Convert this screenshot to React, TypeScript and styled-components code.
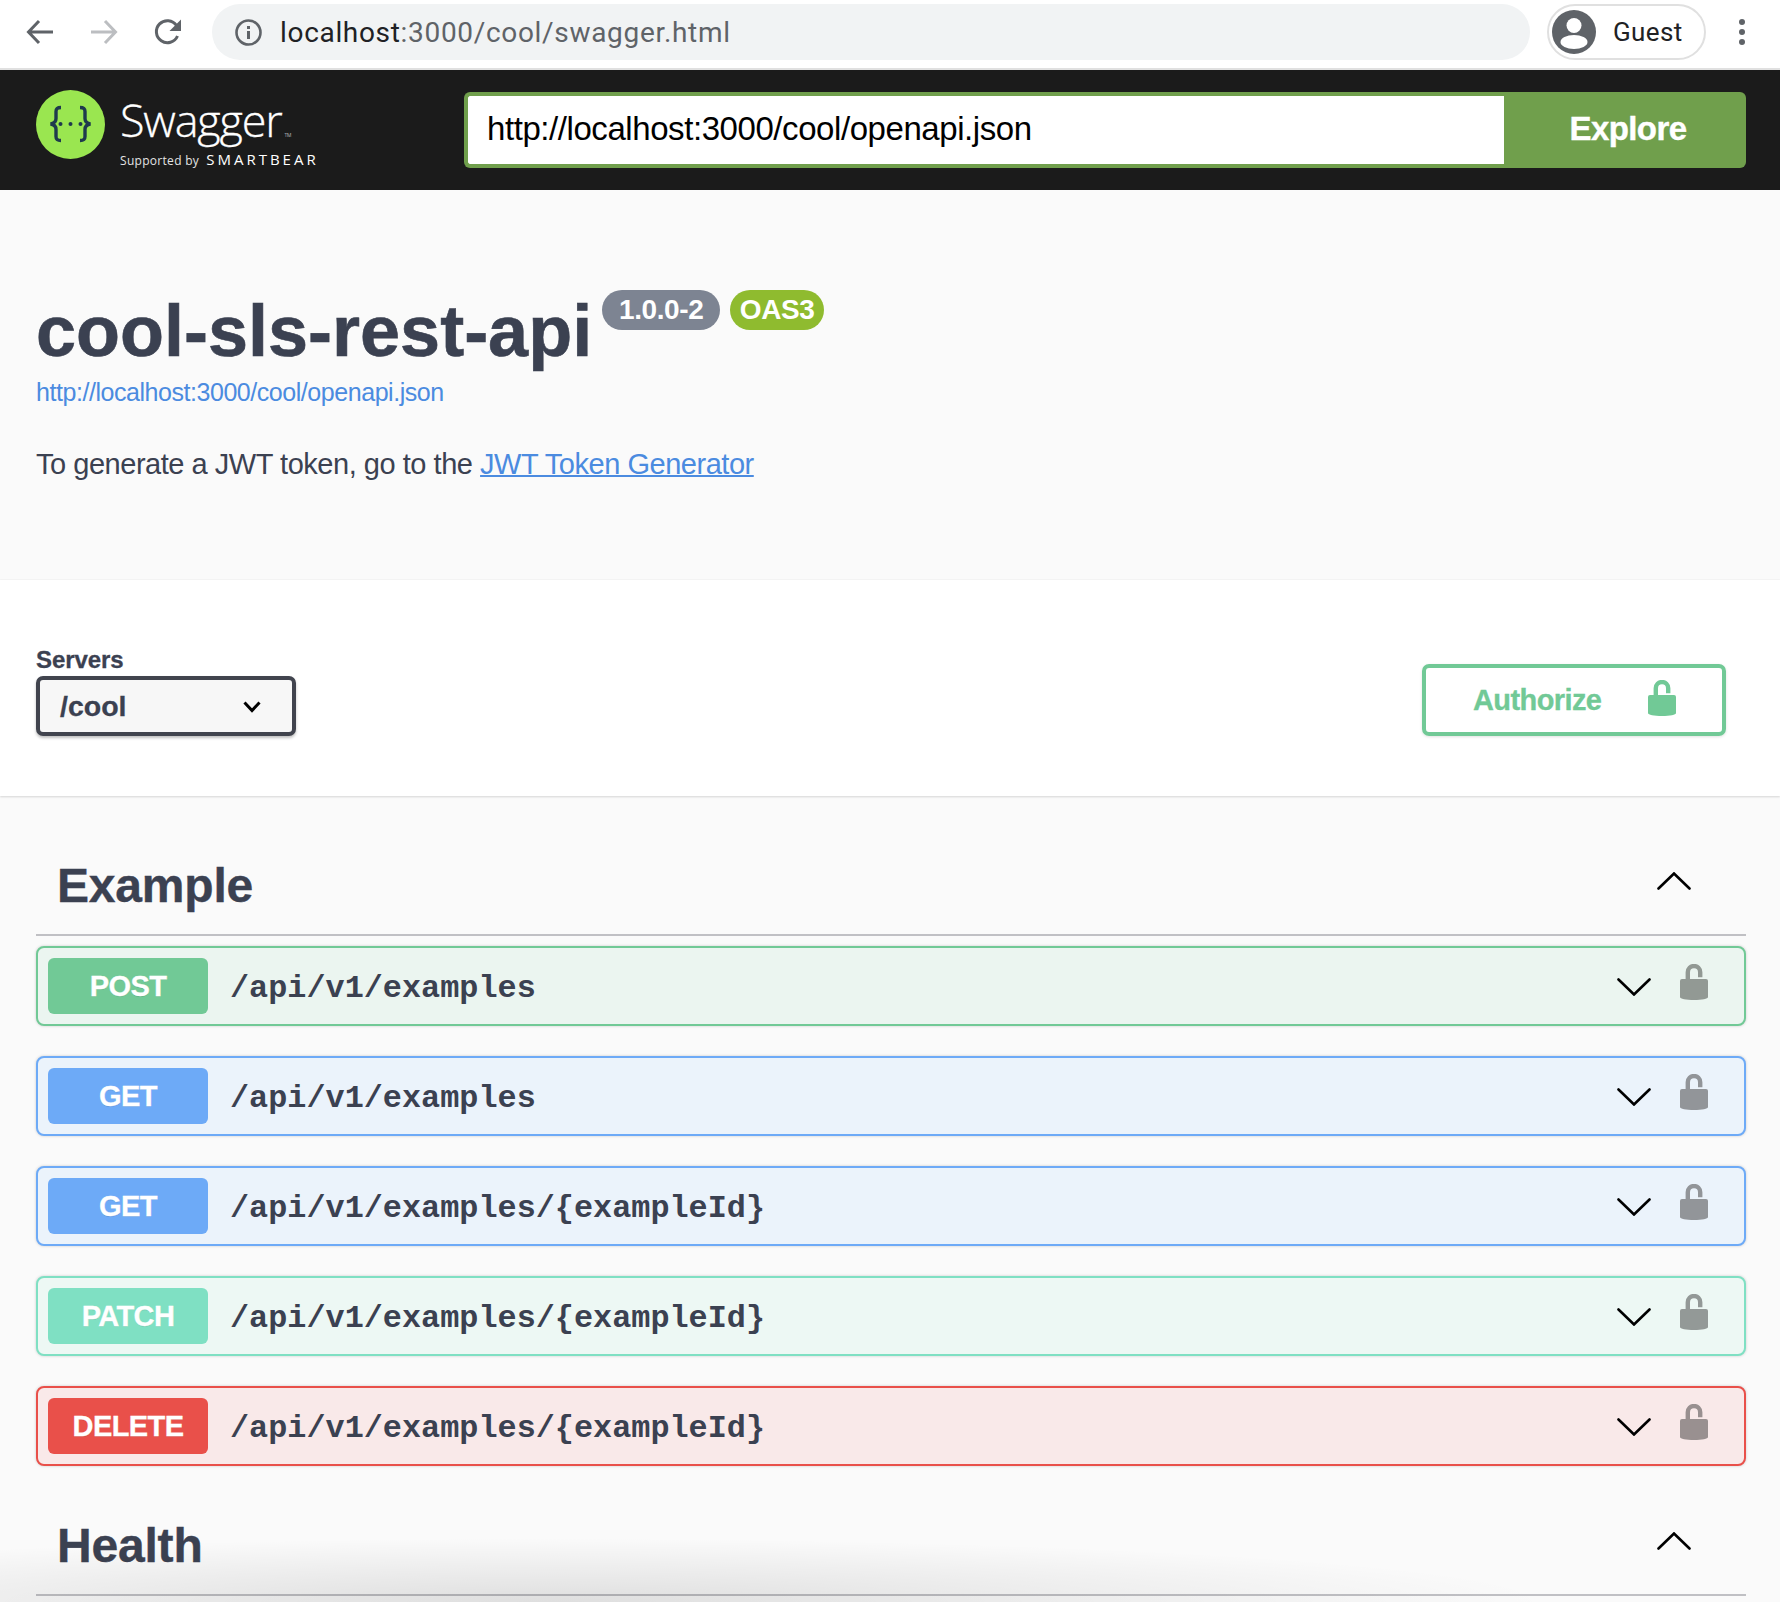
import React from "react";
import styled, { createGlobalStyle } from "styled-components";

const Global = createGlobalStyle`
  html, body { margin: 0; padding: 0; background: #fafafa; overflow: hidden; }
  * { box-sizing: border-box; }
`;

const Page = styled.div`
  position: relative;
  width: 1780px;
  height: 1602px;
  overflow: hidden;
  background: #fafafa;
  font-family: "Liberation Sans", Arial, sans-serif;
  color: #3b4151;
`;

const BrowserBar = styled.div`
  display: flex;
  align-items: center;
  height: 70px;
  padding: 0 35px 4px 8px;
  background: #fff;
  border-bottom: 2px solid #e0e0e0;
`;
const NavButton = styled.div`
  display: flex;
  width: 64px;
  justify-content: center;
  align-items: center;
`;
const AddressBar = styled.div`
  flex: 1;
  display: flex;
  align-items: center;
  height: 56px;
  margin-left: 12px;
  padding-left: 23px;
  gap: 18px;
  border-radius: 28px;
  background: #f1f3f4;
  font-family: Roboto, sans-serif;
  font-size: 28px;
  letter-spacing: 0.68px;
  color: #5f6368;
`;
const Host = styled.span`
  color: #202124;
`;
const GuestPill = styled.div`
  display: flex;
  align-items: center;
  flex: none;
  width: 159px;
  height: 56px;
  margin-left: 17px;
  padding-left: 3px;
  gap: 17px;
  border: 2px solid #e0e0e0;
  border-radius: 28px;
  font-family: Roboto, sans-serif;
  font-size: 26px;
  letter-spacing: 0.4px;
  color: #202124;
`;
const MenuDots = styled.div`
  display: flex;
  flex: none;
  flex-direction: column;
  gap: 4px;
  margin-left: 33px;
`;
const Dot = styled.span`
  width: 6px;
  height: 6px;
  border-radius: 50%;
  background: #5f6368;
`;

const Topbar = styled.div`
  display: flex;
  align-items: center;
  height: 120px;
  padding: 0 34px 0 36px;
  background: #1b1b1b;
`;
const Brand = styled.div`
  display: flex;
  align-items: flex-start;
  align-self: flex-start;
  width: 428px;
  margin-top: 20px;
  gap: 15px;
  color: #fff;
`;
const BrandText = styled.div`
  display: flex;
  flex-direction: column;
  margin-top: 8px;
`;
const Wordmark = styled.span`
  font-family: "Open Sans", sans-serif;
  font-weight: 300;
  font-size: 45px;
  line-height: 44px;
  letter-spacing: -1.2px;
  -webkit-text-stroke: 0.3px #fff;
`;
const Tm = styled.sup`
  font-size: 5px;
  line-height: 0;
  letter-spacing: 0;
  vertical-align: baseline;
  margin-left: 3px;
  -webkit-text-stroke: 0;
`;
const Support = styled.div`
  display: flex;
  align-items: baseline;
  gap: 7px;
  margin-top: 9px;
  font-family: "Open Sans", sans-serif;
  font-size: 12px;
  line-height: 16px;
  letter-spacing: 0.3px;
  color: #e4e4e4;
`;
const SmartBear = styled.span`
  font-size: 15px;
  font-weight: 500;
  letter-spacing: 3px;
  color: #fff;
`;
const SpecForm = styled.div`
  flex: 1;
  display: flex;
  height: 76px;
`;
const SpecInput = styled.div`
  flex: 1;
  display: flex;
  align-items: center;
  padding: 0 0 2px 19px;
  background: #fff;
  border: 4px solid #709f4c;
  border-right: 0;
  border-radius: 6px 0 0 6px;
  font-size: 33px;
  letter-spacing: -0.43px;
  color: #000;
`;
const ExploreButton = styled.div`
  display: flex;
  align-items: center;
  justify-content: center;
  width: 242px;
  padding: 0 0 2px 6px;
  background: #709f4c;
  border-radius: 0 6px 6px 0;
  font-size: 33px;
  font-weight: 700;
  letter-spacing: -0.6px;
  -webkit-text-stroke: 0.4px #fff;
  color: #fff;
`;

const Info = styled.div`
  height: 390px;
  padding: 99px 36px 0;
  border-bottom: 1px solid #f5f5f5;
`;
const TitleRow = styled.div`
  display: flex;
  align-items: flex-start;
`;
const Title = styled.h1`
  margin: 0;
  font-size: 72px;
  line-height: 84px;
  font-weight: 700;
  letter-spacing: 0;
  -webkit-text-stroke: 0.6px #3b4151;
`;
const Pill = styled.span<{ $bg: string; $ml: number; $w: number }>`
  display: flex;
  align-items: center;
  justify-content: center;
  width: ${(p) => p.$w}px;
  height: 40px;
  margin-top: 1px;
  margin-left: ${(p) => p.$ml}px;
  border-radius: 20px;
  background: ${(p) => p.$bg};
  font-size: 28px;
  font-weight: 700;
  letter-spacing: -0.4px;
  color: #fff;
`;
const SpecLink = styled.div`
  margin-top: 4px;
  font-size: 25px;
  line-height: 30px;
  letter-spacing: -0.45px;
  color: #4b8be0;
`;
const Description = styled.p`
  margin: 40px 0 0;
  font-size: 29px;
  line-height: 34px;
  letter-spacing: -0.47px;
`;
const Anchor = styled.span`
  color: #4b8be0;
  text-decoration: underline;
  text-decoration-thickness: 2px;
`;

const SchemeBar = styled.div`
  display: flex;
  align-items: flex-end;
  justify-content: space-between;
  height: 216px;
  padding: 0 54px 60px 36px;
  background: #fff;
  box-shadow: 0 1px 2px rgba(0, 0, 0, 0.15);
`;
const Servers = styled.div`
  display: flex;
  flex-direction: column;
`;
const ServersLabel = styled.span`
  font-size: 24px;
  line-height: 28px;
  font-weight: 700;
  letter-spacing: -0.1px;
  -webkit-text-stroke: 0.3px #3b4151;
`;
const Select = styled.div`
  display: flex;
  align-items: center;
  justify-content: space-between;
  width: 260px;
  height: 60px;
  margin-top: 2px;
  padding: 1px 31px 0 20px;
  background: #f7f7f7;
  border: 4px solid #41444e;
  border-radius: 7px;
  box-shadow: 0 2px 3px rgba(0, 0, 0, 0.25);
  font-size: 28.500px;
  font-weight: 700;
  -webkit-text-stroke: 0.3px #3b4151;
`;
const Authorize = styled.div`
  display: flex;
  align-items: center;
  width: 304px;
  height: 72px;
  padding-left: 47px;
  gap: 47px;
  border: 4px solid #71c996;
  border-radius: 7px;
  box-shadow: 0 1px 3px rgba(0, 0, 0, 0.12);
  font-size: 29px;
  font-weight: 700;
  letter-spacing: -0.6px;
  -webkit-text-stroke: 0.3px #71c996;
  color: #71c996;
`;
const AuthLock = styled.span`
  display: flex;
  margin-top: -5px;
`;

const Operations = styled.div`
  display: flex;
  flex-direction: column;
  padding: 0 34px 0 36px;
`;
const TagHeader = styled.div<{ $h: number }>`
  display: flex;
  align-items: flex-end;
  justify-content: space-between;
  height: ${(p) => p.$h}px;
  padding: 0 55px 20px 21px;
  border-bottom: 2px solid #c0c0c4;
`;
const TagName = styled.h3`
  margin: 0;
  font-size: 48px;
  line-height: 56px;
  font-weight: 700;
  letter-spacing: -0.2px;
  -webkit-text-stroke: 0.4px #3b4151;
`;
const TagToggle = styled.span`
  display: flex;
  margin-bottom: 24px;
`;
const Rows = styled.div`
  display: flex;
  flex-direction: column;
  gap: 30px;
  margin-top: 10px;
`;
const Row = styled.div<{ $border: string; $bg: string }>`
  display: flex;
  align-items: center;
  height: 80px;
  padding: 0 36px 0 10px;
  border: 2px solid ${(p) => p.$border};
  border-radius: 8px;
  background: ${(p) => p.$bg};
  box-shadow: 0 0 3px rgba(0, 0, 0, 0.19);
`;
const Method = styled.span<{ $bg: string }>`
  display: flex;
  align-items: center;
  justify-content: center;
  width: 160px;
  height: 56px;
  border-radius: 6px;
  background: ${(p) => p.$bg};
  font-size: 29px;
  font-weight: 700;
  letter-spacing: -0.6px;
  -webkit-text-stroke: 0.3px #fff;
  color: #fff;
  text-shadow: 0 1px 0 rgba(0, 0, 0, 0.1);
`;
const PathText = styled.span`
  flex: 1;
  margin-left: 22px;
  padding-top: 4px;
  font-family: "Liberation Mono", monospace;
  font-size: 31.850px;
  font-weight: 700;
`;
const RowActions = styled.div`
  display: flex;
  align-items: center;
  gap: 29px;
`;
const ChevronSlot = styled.span`
  display: flex;
  margin-top: 2px;
`;
const LockSlot = styled.span`
  display: flex;
  margin-top: -8px;
`;
const BottomFade = styled.div`
  position: absolute;
  left: 0;
  right: 0;
  bottom: 0;
  height: 64px;
  background: radial-gradient(ellipse 1000px 64px at 550px 100%, rgba(0, 0, 0, 0.11), rgba(0, 0, 0, 0) 100%);
  pointer-events: none;
`;

const Lock = ({ color }: { color: string }) => (
  <svg width="28" height="36" viewBox="0 0 28 36">
    <path d="M7.800 17V8.200a6.200 6.200 0 0 1 12.400 0v5" fill="none" stroke={color} strokeWidth="4.400" />
    <path d="M2 15h24a2 2 0 0 1 2 2v16c0 2-6 3-14 3S0 35 0 33V17a2 2 0 0 1 2-2z" fill={color} />
  </svg>
);
const ChevronDown = () => (
  <svg width="34" height="18" viewBox="0 0 34 18">
    <path d="M1.500 1.500L17 16.500L32.500 1.500" fill="none" stroke="#000" strokeWidth="2.600" strokeLinecap="round" />
  </svg>
);
const ChevronUp = () => (
  <svg width="34" height="18" viewBox="0 0 34 18">
    <path d="M1.500 16.500L17 1.500L32.500 16.500" fill="none" stroke="#000" strokeWidth="2.600" strokeLinecap="round" />
  </svg>
);
const SmallChevron = () => (
  <svg width="18" height="12" viewBox="0 0 18 12">
    <path d="M1.500 1.500L9 9.500L16.500 1.500" fill="none" stroke="#000" strokeWidth="3" />
  </svg>
);
const Logo = () => (
  <svg width="69" height="69" viewBox="0 0 69 69">
    <circle cx="34.500" cy="34.500" r="34.500" fill="#9ae650" />
    <path d="M25 17.500c-3.500 0-5 1-5 4v7c0 3-2 5-5.500 5.500 3.500.5 5.500 2.500 5.500 5.500v7c0 3 1.500 4 5 4" fill="none" stroke="#1f3a4d" strokeWidth="3.400" />
    <path d="M44 17.500c3.500 0 5 1 5 4v7c0 3 2 5 5.500 5.500-3.500.5-5.500 2.500-5.500 5.500v7c0 3-1.500 4-5 4" fill="none" stroke="#1f3a4d" strokeWidth="3.400" />
    <circle cx="24.500" cy="34" r="2" fill="#1f3a4d" />
    <circle cx="34.500" cy="34" r="2" fill="#1f3a4d" />
    <circle cx="44.500" cy="34" r="2" fill="#1f3a4d" />
  </svg>
);
const ArrowLeft = ({ color }: { color: string }) => (
  <svg width="28" height="26" viewBox="0 0 28 26">
    <path d="M27 13H3M13 2L2.500 13L13 24" fill="none" stroke={color} strokeWidth="3" />
  </svg>
);
const ArrowRight = ({ color }: { color: string }) => (
  <svg width="28" height="26" viewBox="0 0 28 26">
    <path d="M1 13H25M15 2L25.500 13L15 24" fill="none" stroke={color} strokeWidth="3" />
  </svg>
);
const Reload = () => (
  <svg width="28" height="28" viewBox="0 0 28 28">
    <path d="M23.500 18a11 11 0 1 1-1-10.500" fill="none" stroke="#5f6368" strokeWidth="3" />
    <path d="M27 1.500V13H15.500z" fill="#5f6368" />
  </svg>
);
const InfoIcon = () => (
  <svg width="27" height="27" viewBox="0 0 27 27">
    <circle cx="13.500" cy="13.500" r="12" fill="none" stroke="#5f6368" strokeWidth="2.600" />
    <rect x="12" y="12" width="3" height="8" fill="#5f6368" />
    <rect x="12" y="7" width="3" height="3" fill="#5f6368" />
  </svg>
);
const Avatar = () => (
  <svg width="44" height="44" viewBox="0 0 44 44">
    <circle cx="22" cy="22" r="22" fill="#5f6368" />
    <circle cx="22" cy="15.500" r="7.500" fill="#fff" />
    <ellipse cx="22" cy="32" rx="13.500" ry="7" fill="#fff" />
  </svg>
);

type Op = { method: string; path: string; border: string; bg: string; tone: string; lock: string };
const ops: Op[] = [
  { method: "POST", path: "/api/v1/examples", border: "#71c996", bg: "#ebf5f0", tone: "#71c996", lock: "#929994" },
  { method: "GET", path: "/api/v1/examples", border: "#6daaf7", bg: "#ebf3fb", tone: "#6daaf7", lock: "#929599" },
  { method: "GET", path: "/api/v1/examples/{exampleId}", border: "#6daaf7", bg: "#ebf3fb", tone: "#6daaf7", lock: "#929599" },
  { method: "PATCH", path: "/api/v1/examples/{exampleId}", border: "#7fe0c3", bg: "#edf8f4", tone: "#7fe0c3", lock: "#939997" },
  { method: "DELETE", path: "/api/v1/examples/{exampleId}", border: "#e9504a", bg: "#f9e9e9", tone: "#e9504a", lock: "#999090" },
];

export default function App() {
  return (
    <Page>
      <Global />
      <BrowserBar>
        <NavButton><ArrowLeft color="#5f6368" /></NavButton>
        <NavButton><ArrowRight color="#bcbec1" /></NavButton>
        <NavButton><Reload /></NavButton>
        <AddressBar>
          <InfoIcon />
          <span><Host>localhost</Host>:3000/cool/swagger.html</span>
        </AddressBar>
        <GuestPill><Avatar />Guest</GuestPill>
        <MenuDots><Dot /><Dot /><Dot /></MenuDots>
      </BrowserBar>
      <Topbar>
        <Brand>
          <Logo />
          <BrandText>
            <Wordmark>Swagger<Tm>TM</Tm></Wordmark>
            <Support>Supported by <SmartBear>SMARTBEAR</SmartBear></Support>
          </BrandText>
        </Brand>
        <SpecForm>
          <SpecInput>http://localhost:3000/cool/openapi.json</SpecInput>
          <ExploreButton>Explore</ExploreButton>
        </SpecForm>
      </Topbar>
      <Info>
        <TitleRow>
          <Title>cool-sls-rest-api</Title>
          <Pill $bg="#7d8492" $ml={10} $w={118}>1.0.0-2</Pill>
          <Pill $bg="#8fbb2f" $ml={10} $w={94}>OAS3</Pill>
        </TitleRow>
        <SpecLink>http://localhost:3000/cool/openapi.json</SpecLink>
        <Description>To generate a JWT token, go to the <Anchor>JWT Token Generator</Anchor></Description>
      </Info>
      <SchemeBar>
        <Servers>
          <ServersLabel>Servers</ServersLabel>
          <Select>/cool<SmallChevron /></Select>
        </Servers>
        <Authorize>Authorize<AuthLock><Lock color="#71c996" /></AuthLock></Authorize>
      </SchemeBar>
      <Operations>
        <TagHeader $h={140}>
          <TagName>Example</TagName>
          <TagToggle><ChevronUp /></TagToggle>
        </TagHeader>
        <Rows>
          {ops.map((op, i) => (
            <Row key={i} $border={op.border} $bg={op.bg}>
              <Method $bg={op.tone}>{op.method}</Method>
              <PathText>{op.path}</PathText>
              <RowActions>
                <ChevronSlot><ChevronDown /></ChevronSlot>
                <LockSlot><Lock color={op.lock} /></LockSlot>
              </RowActions>
            </Row>
          ))}
        </Rows>
        <TagHeader $h={130}>
          <TagName>Health</TagName>
          <TagToggle><ChevronUp /></TagToggle>
        </TagHeader>
      </Operations>
      <BottomFade />
    </Page>
  );
}
